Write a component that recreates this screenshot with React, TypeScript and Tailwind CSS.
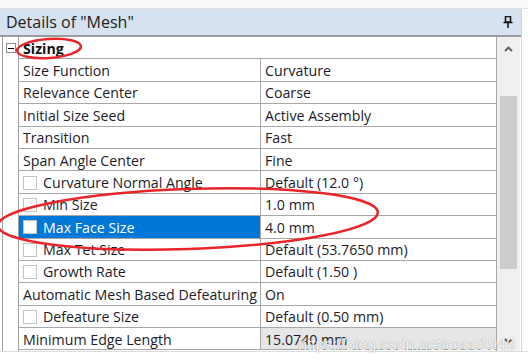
import React from 'react';

interface Row {
  label: string;
  value: string;
  check?: boolean;
  selected?: boolean;
  readOnly?: boolean;
}

const rows: Row[] = [
  { label: 'Size Function', value: 'Curvature' },
  { label: 'Relevance Center', value: 'Coarse' },
  { label: 'Initial Size Seed', value: 'Active Assembly' },
  { label: 'Transition', value: 'Fast' },
  { label: 'Span Angle Center', value: 'Fine' },
  { label: 'Curvature Normal Angle', value: 'Default (12.0 °)', check: true },
  { label: 'Min Size', value: '1.0 mm', check: true },
  { label: 'Max Face Size', value: '4.0 mm', check: true, selected: true },
  { label: 'Max Tet Size', value: 'Default (53.7650 mm)', check: true },
  { label: 'Growth Rate', value: 'Default (1.50 )', check: true },
  { label: 'Automatic Mesh Based Defeaturing', value: 'On' },
  { label: 'Defeature Size', value: 'Default (0.50 mm)', check: true },
  { label: 'Minimum Edge Length', value: '15.0740 mm', readOnly: true },
];

const PinIcon = () => (
  <svg width="10" height="12" viewBox="0 0 10 12" className="text-[#1a1a1a]">
    <rect x="2.5" y="0.5" width="5" height="5.5" fill="none" stroke="currentColor" strokeWidth="1.6" />
    <line x1="0.5" y1="6.5" x2="9.5" y2="6.5" stroke="currentColor" strokeWidth="1.6" />
    <line x1="5" y1="7" x2="5" y2="12" stroke="currentColor" strokeWidth="1.6" />
  </svg>
);

const Chevron = ({ up }: { up?: boolean }) => (
  <svg width="9" height="6" viewBox="0 0 9 6">
    <path
      d={up ? 'M1 5 L4.5 1.5 L8 5' : 'M1 1 L4.5 4.5 L8 1'}
      fill="none"
      stroke="#5a5a5a"
      strokeWidth="1.8"
    />
  </svg>
);

const PropertyRow: React.FC<{ row: Row }> = ({ row }) => (
  <div className="flex h-[22.4px] border-b border-[#a8a8a8]">
    <div
      className={`flex w-[242px] items-center border-r border-[#a8a8a8] pl-[4px] pt-[1px] ${
        row.selected ? 'bg-[#0078d7] text-white' : 'bg-white text-[#1c1c2a]'
      }`}
    >
      {row.check && (
        <span className="mr-[6px] h-[14px] w-[14px] shrink-0 border border-[#c4c4c4] bg-white" />
      )}
      <span className="whitespace-nowrap">{row.label}</span>
    </div>
    <div
      className={`flex flex-1 items-center pl-[4px] pt-[1px] text-[#1c1c2a] ${
        row.readOnly ? 'bg-[#e6e6e6]' : 'bg-white'
      }`}
    >
      <span className="whitespace-nowrap">{row.value}</span>
    </div>
  </div>
);

export default function App() {
  return (
    <div
      className="relative h-[360px] w-[528px] overflow-hidden bg-white text-[14.2px]"
      style={{ fontFamily: '"Open Sans", "Noto Sans", sans-serif' }}
    >
      <div className="h-[9px] border-b border-[#e4e4e4] bg-[#fafafa]" />

      <div className="w-[522px] border-r border-[#d4d4d4]">
        <div className="flex h-[28px] items-center justify-between border-b-2 border-[#9c9c9c] bg-[#d6e2f0] pl-[6px] pr-[8px]">
          <span className="text-[16px] text-[#222]">Details of "Mesh"</span>
          <PinIcon />
        </div>

        <div className="flex h-[314px] pl-[2px]">
          <div className="w-[17px] border-l border-r border-[#a0a0a0] pl-[3px] pt-[6px]">
            <div className="flex h-[10px] w-[10px] items-center justify-center border border-[#8c8c8c] bg-white">
              <div className="h-[1px] w-[6px] bg-black" />
            </div>
          </div>

          <div className="w-[478px] border-r border-[#a8a8a8]">
            <div className="flex h-[22.4px] items-center border-b border-[#a8a8a8] pl-[4px] pt-[1px] font-bold text-[#111]">
              Sizing
            </div>
            {rows.map(r => (
              <PropertyRow key={r.label} row={r} />
            ))}
          </div>

          <div className="flex w-[23px] flex-col items-center bg-[#f0f0f0]">
            <div className="flex h-[22px] items-center justify-center pt-[2px]">
              <Chevron up />
            </div>
            <div className="mt-[37px] h-[173px] w-[17px] bg-[#cdcdcd]" />
            <div className="mt-auto flex h-[20px] items-center justify-center">
              <Chevron />
            </div>
          </div>
        </div>
      </div>

      <div className="h-[8px] border-t border-[#dcdcdc] bg-white" />

      <div
        className="pointer-events-none absolute left-[298px] top-[333px] whitespace-nowrap text-[16px] text-[#f6f6f6] [text-shadow:0_0_1px_rgba(0,0,0,0.45)]"
        style={{ fontFamily: '"Liberation Sans", Arial, sans-serif' }}
      >
        https://blog.csdn.net/coco1949
      </div>

      <svg className="pointer-events-none absolute left-0 top-0" width="528" height="360">
        <ellipse cx="49" cy="48.5" rx="32" ry="9.5" fill="none" stroke="#e8262a" strokeWidth="2.5" transform="rotate(-4 49 48.5)" />
        <ellipse cx="188" cy="219" rx="190" ry="30" fill="none" stroke="#e8262a" strokeWidth="2.5" transform="rotate(-2 188 219)" />
      </svg>
    </div>
  );
}
